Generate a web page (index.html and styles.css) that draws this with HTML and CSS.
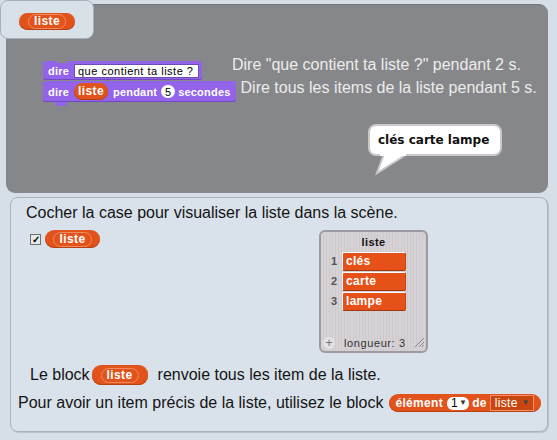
FILE: index.html
```html
<!DOCTYPE html>
<html lang="fr">
<head>
  <meta charset="UTF-8">
  <title>Listes</title>
  <link rel="stylesheet" href="styles.css">
</head>
<body>

  <section class="stage">
    <div class="tab">
      <span class="reporter"><span class="var">liste</span></span>
    </div>

    <div class="script">
      <div class="row">
        <div class="block top"><b>dire</b><span class="field">que contient ta liste ?</span></div>
        <p class="note first">Dire "que contient ta liste ?" pendant 2 s.</p>
      </div>
      <div class="row">
        <div class="block last"><b>dire</b><span class="reporter inner"><span class="var">liste</span></span><b>pendant</b><span class="num">5</span><b>secondes</b></div>
        <p class="note second">Dire tous les items de la liste pendant 5 s.</p>
      </div>
    </div>

    <div class="bubble">
      clés carte lampe
      <svg class="tail" width="34" height="22" viewBox="0 0 34 22">
        <path d="M10 0 L3 19 L30 2" fill="#fff" stroke="#cbc7cc" stroke-width="2"/>
        <rect x="6" y="0" width="26" height="2" fill="#fff"/>
      </svg>
    </div>
  </section>

  <section class="info">
    <p class="text intro">Cocher la case pour visualiser la liste dans la scène.</p>

    <div class="show-row">
      <div class="check-item">
        <span class="checkbox">✓</span>
        <span class="reporter big"><span class="var">liste</span></span>
      </div>

      <div class="watcher">
        <div class="watcher-title">liste</div>
        <ol class="items">
          <li><span class="idx">1</span><span class="cell">clés</span></li>
          <li><span class="idx">2</span><span class="cell">carte</span></li>
          <li><span class="idx">3</span><span class="cell">lampe</span></li>
        </ol>
        <div class="watcher-foot">
          <span class="plus">+</span>
          <span class="length">longueur: 3</span>
          <svg class="grip" width="11" height="11" viewBox="0 0 11 11">
            <path d="M1 10 L10 1 M5 10 L10 5 M8 10 L10 8" stroke="#8a868a" stroke-width="1"/>
          </svg>
        </div>
      </div>
    </div>

    <p class="text line-block">Le block <span class="reporter wide"><span class="var">liste</span></span> renvoie tous les item de la liste.</p>

    <p class="text line-item">Pour avoir un item précis de la liste, utilisez le block
      <span class="item-block">élément <span class="num-drop">1<i>▼</i></span> de <span class="list-drop">liste<i>▼</i></span></span>
    </p>
  </section>

</body>
</html>
```

FILE: styles.css
```css
body {
  margin: 0;
  background-color: #d6dfe8;
  font-family: "Liberation Sans", Arial, sans-serif;
  width: 557px;
  height: 440px;
  overflow: hidden;
}

p {
  margin: 0;
}

/* grey scene at the top */
.stage {
  position: relative;
  margin: 4px 9px 0 6px;
  height: 189px;
  background-color: #86878a;
  border-top: 1px solid #75767a;
  border-radius: 0 9px 9px 9px;
  box-sizing: border-box;
  padding: 56px 0 0 37px;
}

.tab {
  position: absolute;
  left: -6px;
  top: -5px;
  width: 94px;
  height: 39px;
  box-sizing: border-box;
  padding: 11px 0 0 18px;
  background-color: #d8e0e8;
  border: 1px solid #a9b0b8;
  border-radius: 8px;
}

/* orange list reporter */
.reporter {
  display: inline-flex;
  align-items: center;
  justify-content: center;
  width: 56px;
  height: 17px;
  background-color: #e2521b;
  border-radius: 9px;
  box-shadow: inset 0 -1px 0 #b6410f;
  vertical-align: middle;
}

.reporter .var {
  padding: 0 5px;
  height: 13px;
  line-height: 13px;
  border: 1px solid #f08a62;
  border-radius: 8px;
  color: #fff;
  font-weight: bold;
  font-size: 12px;
  letter-spacing: 0.4px;
}

.reporter.inner {
  width: 34px;
  height: 17px;
  margin: 0 4px 0 3px;
}

.reporter.inner .var {
  border: none;
  padding: 0;
  font-size: 12px;
}

.reporter.big {
  width: 55px;
  height: 18px;
}

.reporter.wide {
  width: 56px;
  height: 20px;
  margin: 0 10px 0 2px;
}

/* purple looks blocks */
.script {
  display: flex;
  flex-direction: column;
  gap: 1px;
}

.row {
  display: flex;
  align-items: flex-start;
}

.block {
  position: relative;
  display: flex;
  align-items: center;
  height: 19px;
  padding: 0 3px 0 4px;
  background-color: #9363e9;
  border-radius: 3px;
  box-shadow: inset 0 -1px 0 #7447c4;
  color: #fff;
  font-size: 11px;
  letter-spacing: 0.2px;
}

.block b {
  margin: 0 2px 0 1px;
}

.block.top::before {
  content: "";
  position: absolute;
  left: 14px;
  top: 0;
  width: 10px;
  height: 2px;
  background-color: #86878a;
}

.block.last {
  height: 21px;
}

.block.last::after {
  content: "";
  position: absolute;
  left: 12px;
  bottom: -4px;
  width: 12px;
  height: 4px;
  background-color: #9363e9;
  border-radius: 0 0 3px 3px;
}

.field {
  margin-left: 3px;
  padding: 0 3px;
  height: 12px;
  line-height: 12px;
  width: 117px;
  background-color: #fff;
  border: 1px solid #6d4bb0;
  color: #000;
  font-size: 11px;
  letter-spacing: 0.5px;
  white-space: nowrap;
}

.num {
  display: inline-flex;
  align-items: center;
  justify-content: center;
  width: 14px;
  height: 13px;
  margin: 0 2px;
  background-color: #fff;
  border-radius: 7px;
  color: #000;
  font-size: 11px;
}

.note {
  color: #ececec;
  font-size: 16px;
  line-height: 18px;
  white-space: nowrap;
}

.note.first {
  margin: -5px 0 0 30px;
}

.note.second {
  margin: -2px 0 0 5px;
}

/* speech bubble */
.bubble {
  position: relative;
  width: 134px;
  height: 32px;
  box-sizing: border-box;
  margin: 22px 0 0 325px;
  padding-left: 8px;
  background-color: #fff;
  border: 2px solid #cbc7cc;
  border-radius: 8px;
  font-family: "DejaVu Sans", sans-serif;
  font-weight: bold;
  font-size: 12px;
  line-height: 28px;
  color: #111;
}

.tail {
  position: absolute;
  left: 4px;
  top: 28px;
}

/* light info panel */
.info {
  margin: 4px 9px 0 10px;
  height: 235px;
  box-sizing: border-box;
  padding: 6px 0 0 0;
  background-color: #d9e2ea;
  border: 1px solid #aab2ba;
  border-radius: 8px;
  box-shadow: 1px 1px 0 #bac2ca;
}

.text {
  color: #141414;
  font-size: 16px;
  line-height: 18px;
  white-space: nowrap;
}

.intro {
  padding-left: 15px;
}

.show-row {
  display: flex;
  align-items: flex-start;
  margin-top: 8px;
  padding-left: 19px;
}

.check-item {
  display: flex;
  align-items: center;
  width: 289px;
}

.checkbox {
  display: inline-flex;
  align-items: center;
  justify-content: center;
  width: 9px;
  height: 9px;
  margin-right: 4px;
  background-color: #e8e8e8;
  border: 1px solid #707070;
  font-size: 10px;
  line-height: 9px;
  color: #000;
  font-weight: bold;
}

/* list watcher */
.watcher {
  display: flex;
  flex-direction: column;
  width: 109px;
  height: 123px;
  box-sizing: border-box;
  background: repeating-linear-gradient(90deg, #d6d2d6 0 2px, #cdc9cd 2px 3px);
  border: 2px solid #9c9a9e;
  border-radius: 6px;
}

.watcher-title {
  margin-top: 4px;
  text-align: center;
  font-size: 11px;
  font-weight: bold;
  color: #111;
  letter-spacing: 0.4px;
}

.items {
  list-style: none;
  margin: 3px 0 0 0;
  padding: 0;
}

.items li {
  display: flex;
  align-items: center;
  height: 20px;
}

.idx {
  width: 16px;
  text-align: right;
  font-size: 11px;
  font-weight: bold;
  color: #555;
}

.cell {
  margin-left: 5px;
  width: 64px;
  height: 19px;
  box-sizing: border-box;
  padding-left: 3px;
  background-color: #e6511a;
  border-top: 1px solid #fff;
  border-left: 1px solid #fff;
  border-bottom: 1px solid #9e3a10;
  border-right: 1px solid #c04512;
  border-radius: 2px;
  color: #fff;
  font-size: 12px;
  font-weight: bold;
  line-height: 16px;
  letter-spacing: 0.3px;
}

.watcher-foot {
  display: flex;
  align-items: center;
  margin-top: auto;
  height: 15px;
  padding: 0 1px 1px 2px;
}

.plus {
  display: inline-flex;
  align-items: center;
  justify-content: center;
  width: 12px;
  height: 12px;
  border-radius: 6px;
  background-color: #e4e0e4;
  color: #777;
  font-size: 13px;
  line-height: 12px;
}

.length {
  margin-left: 9px;
  font-size: 11px;
  color: #333;
  letter-spacing: 0.6px;
}

.grip {
  margin-left: auto;
}

.line-block {
  display: flex;
  align-items: center;
  height: 20px;
  margin-top: 12px;
  padding-left: 19px;
}

.line-item {
  display: flex;
  align-items: center;
  height: 18px;
  margin-top: 9px;
  padding-left: 7px;
}

.item-block {
  display: inline-flex;
  align-items: center;
  height: 18px;
  margin-left: 5px;
  padding: 0 7px 0 7px;
  background-color: #e2521b;
  border-radius: 9px;
  box-shadow: inset 0 -1px 0 #b6410f;
  color: #fff;
  font-size: 12px;
  font-weight: bold;
  letter-spacing: 0.3px;
}

.item-block i {
  font-style: normal;
  font-size: 8px;
  margin-left: 1px;
}

.num-drop {
  display: inline-flex;
  align-items: center;
  height: 13px;
  margin: 0 3px 0 4px;
  padding: 0 2px 0 4px;
  background-color: #fff;
  border-radius: 6px;
  color: #000;
  font-weight: normal;
  font-size: 12px;
}

.num-drop i {
  color: #333;
}

.list-drop {
  display: inline-flex;
  align-items: center;
  height: 14px;
  margin-left: 3px;
  padding: 0 3px 0 4px;
  background-color: #c9460f;
  border: 1px solid #f29070;
  font-weight: normal;
  font-size: 12px;
}

.list-drop i {
  color: #444;
  margin-left: 4px;
}
```
